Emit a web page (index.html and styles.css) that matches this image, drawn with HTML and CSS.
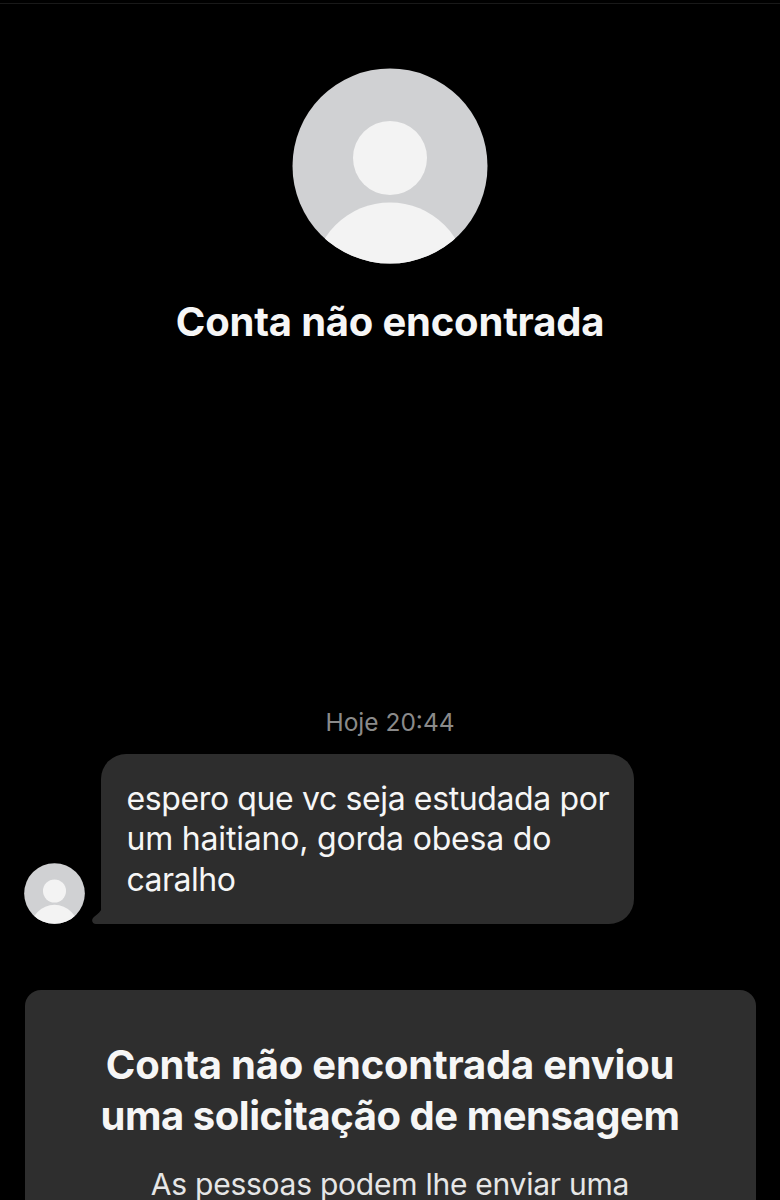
FILE: index.html
```
<!DOCTYPE html>
<html lang="pt-br">
<head>
<meta charset="utf-8" />
<meta name="viewport" content="width=device-width, initial-scale=1.0">
<title>Mensagens</title>
<link rel="stylesheet" href="styles.css">
</head>
<body>
<div class="chat">
	<div class="profile">
		<svg class="profile_img" viewBox="0 0 196 196">
			<clipPath id="round"><circle cx="98" cy="98" r="97.5"/></clipPath>
			<g clip-path="url(#round)">
				<rect width="196" height="196" fill="#d0d1d3"/>
				<circle cx="98" cy="90" r="37" fill="#f3f3f3"/>
				<circle cx="98" cy="211.5" r="77" fill="#f3f3f3"/>
			</g>
		</svg>
		<h1>Conta não encontrada</h1>
	</div>
	<div class="time">Hoje 20:44</div>
	<div class="message">
		<svg class="heard_img" viewBox="0 0 196 196">
			<g clip-path="url(#round)">
				<rect width="196" height="196" fill="#d0d1d3"/>
				<circle cx="98" cy="90" r="37" fill="#f3f3f3"/>
				<circle cx="98" cy="211.5" r="77" fill="#f3f3f3"/>
			</g>
		</svg>
		<div class="bubble">
			<p><span class="line1">espero que vc seja estudada por</span><br><span class="line2">um haitiano, gorda obesa do</span><br><span class="line3">caralho</span></p>
			<svg class="tail" viewBox="0 0 10 16"><path d="M10 0C9 3 6 6 2.500 8.500C-1.500 11.500 0 16 4 16H10Z" fill="#2d2d2d"/></svg>
		</div>
	</div>
	<div class="request">
		<h2>Conta não encontrada enviou<br><span class="title2">uma solicitação de mensagem</span></h2>
		<p>As pessoas podem lhe enviar uma</p>
	</div>
</div>
</body>
</html>
```

FILE: styles.css
```
*{box-sizing:border-box;}
body{margin:0;background:#000;color:#f6f6f6;font-family:Inter,"Liberation Sans",sans-serif;}
h1,h2,p{margin:0;}
svg{display:block;}
.chat{height:1200px;overflow:hidden;display:flex;flex-direction:column;border-top:3px solid #000;box-shadow:inset 0 1px #191919;}
.profile,.time,.message,.request{flex:none;}
.profile{height:700px;padding-top:65px;display:flex;flex-direction:column;align-items:center;}
.profile_img{width:196px;height:196px;}
.profile h1{margin-top:33px;font-size:40px;line-height:50px;font-weight:700;letter-spacing:-.2px;}
.time{height:51px;padding-top:3px;text-align:center;font-size:24.500px;line-height:32px;color:#8a8a8a;}
.message{display:flex;align-items:flex-end;padding-left:24px;}
.heard_img{width:61px;height:61px;margin-right:16px;}
.bubble{position:relative;width:533px;height:170px;padding:25px 0 0 25.500px;background:#2d2d2d;border-radius:25px 25px 25px 0;}
.bubble p{font-size:32px;line-height:40.300px;white-space:nowrap;}
.line1{letter-spacing:-.38px;}
.line2{letter-spacing:-.2px;}
.line3{letter-spacing:-.5px;}
.tail{position:absolute;left:-9px;bottom:0;width:10px;height:16px;}
.request{height:240px;margin:66px 24.500px 0;padding-top:49px;background:#2e2e2e;border-radius:16px 16px 0 0;text-align:center;}
.request h2{font-size:40px;line-height:51px;font-weight:700;letter-spacing:-.22px;}
.title2{letter-spacing:-.46px;}
.request p{margin-top:22px;font-size:30px;line-height:42px;letter-spacing:-.25px;color:#e6e6e6;}
```
